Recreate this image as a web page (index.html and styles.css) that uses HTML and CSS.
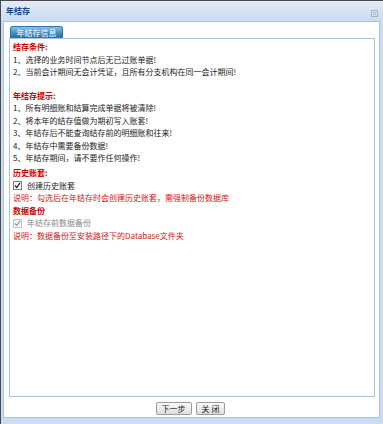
FILE: index.html
```html
<!DOCTYPE html>
<html lang="zh">
<head>
<meta charset="utf-8">
<title>年结存</title>
<link rel="stylesheet" href="styles.css">
</head>
<body>
<div class="win">
  <div class="header">
    <span class="title">年结存</span>
    <svg class="close" width="7" height="7" viewBox="0 0 7 7"><rect x="0.5" y="0.5" width="6" height="6" fill="none" stroke="#a9b3bf"/><path d="M2 2L5 5M5 2L2 5" stroke="#a9b3bf" stroke-width="1"/></svg>
  </div>
  <div class="main">
    <div class="tabs"><span class="tab">年结存信息</span></div>
    <div class="panel">
      <div class="sec sec-a">
        <div class="head">结存条件:</div>
        <div class="line">1、选择的业务时间节点后无已过账单据!</div>
        <div class="line">2、当前会计期间无会计凭证，且所有分支机构在同一会计期间!</div>
      </div>
      <div class="sec sec-b">
        <div class="head">年结存提示:</div>
        <div class="line">1、所有明细账和结算完成单据将被清除!</div>
        <div class="line">2、将本年的结存值做为期初写入账套!</div>
        <div class="line">3、年结存后不能查询结存前的明细账和往来!</div>
        <div class="line">4、年结存中需要备份数据!</div>
        <div class="line">5、年结存期间，请不要作任何操作!</div>
      </div>
      <div class="sec">
        <div class="head">历史账套:</div>
        <div class="line chk-row"><span class="chk"><svg width="7" height="7" viewBox="0 0 7 7"><path d="M1 3.5L2.8 5.5L6 0.8" fill="none" stroke="#222" stroke-width="1.2"/></svg></span>创建历史账套</div>
        <div class="line note">说明：勾选后在年结存时会创建历史账套，需强制备份数据库</div>
        <div class="head">数据备份</div>
        <div class="line chk-row disabled"><span class="chk"><svg width="7" height="7" viewBox="0 0 7 7"><path d="M1 3.5L2.8 5.5L6 0.8" fill="none" stroke="#9a9a9a" stroke-width="1.2"/></svg></span>年结存前数据备份</div>
        <div class="line note">说明：数据备份至安装路径下的Database文件夹</div>
      </div>
    </div>
    <div class="buttons">
      <span class="btn">下一步</span>
      <span class="btn">关 闭</span>
    </div>
  </div>
</div>
</body>
</html>
```
FILE: styles.css
```css
html, body {
  margin: 0;
  padding: 0;
  background: #fff;
}
body {
  width: 383px;
  height: 424px;
  overflow: hidden;
  font-family: "Noto Sans CJK SC", "Liberation Sans", sans-serif;
}
.win {
  box-sizing: border-box;
  width: 383px;
  height: 424px;
  border-left: 1px solid #4a4a4a;
  border-top: 1px solid #4a4a4a;
  background: #cddcf0;
  display: flex;
  flex-direction: column;
}
.header {
  height: 20px;
  flex: none;
  display: flex;
  align-items: center;
  justify-content: space-between;
  padding: 0 5px 0 5px;
  background: linear-gradient(#e3ebf7, #ccdbef);
}
.title {
  font-size: 8px;
  font-weight: bold;
  color: #15428b;
  line-height: 20px;
}
.close {
  display: block;
  margin-top: 4px;
}
.main {
  box-sizing: border-box;
  height: 397px;
  flex: none;
  margin: 0 3px 0 2px;
  background: #fff;
  border: 1px solid #a9c3e4;
  padding: 4px 4px 0 5px;
  display: flex;
  flex-direction: column;
}
.tabs {
  height: 12px;
  flex: none;
  display: flex;
  padding-left: 1px;
}
.tab {
  box-sizing: border-box;
  width: 53px;
  height: 12px;
  border: 1px solid #2f73a8;
  border-bottom: none;
  border-radius: 3px 3px 0 0;
  background: linear-gradient(#8cc4e6, #3d8cc4 55%, #2670aa);
  color: #fff;
  font-size: 8px;
  line-height: 11px;
  text-align: center;
}
.panel {
  box-sizing: border-box;
  height: 359px;
  flex: none;
  border: 1px solid #a9c3e4;
  padding: 2px 3px;
  font-size: 8px;
  color: #222;
}
.line, .head {
  height: 12.5px;
  line-height: 12.5px;
  white-space: nowrap;
}
.head {
  color: #cc0000;
  font-weight: bold;
}
.sec-a {
  margin-bottom: 11px;
}
.sec-b {
  margin-bottom: 2.5px;
}
.note {
  color: #d81414;
}
.chk-row {
  display: flex;
  align-items: center;
}
.chk {
  box-sizing: border-box;
  width: 9px;
  height: 9px;
  border: 1px solid #7f7f7f;
  background: linear-gradient(#f0f0f0, #fff);
  margin-right: 5px;
  display: flex;
  align-items: center;
  justify-content: center;
}
.chk svg {
  display: block;
}
.disabled {
  color: #8a8a8a;
}
.disabled .chk {
  border-color: #c2c2c2;
}
.buttons {
  display: flex;
  justify-content: center;
  gap: 4px;
  padding-top: 5px;
  padding-right: 3px;
}
.btn {
  box-sizing: border-box;
  height: 13px;
  padding: 0 5px;
  border: 1px solid #9c9c9c;
  border-radius: 2px;
  background: linear-gradient(#fafafa, #dedede);
  font-size: 8px;
  line-height: 11px;
  color: #222;
}
```
